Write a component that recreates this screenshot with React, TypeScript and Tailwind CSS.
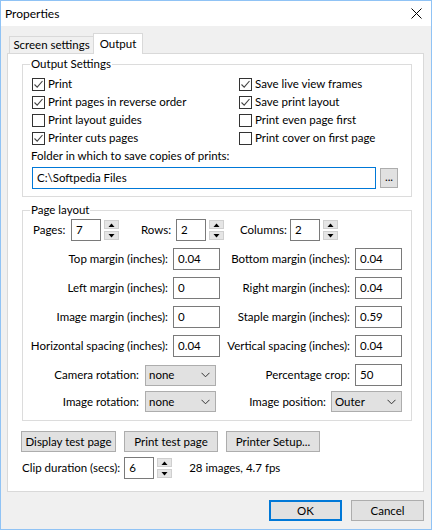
import React from "react";

const font = { fontFamily: 'Lato, "Segoe UI", Arial, sans-serif' };

function Check({ checked, label }: { checked?: boolean; label: string }) {
  return (
    <div className="flex h-[18px] items-center">
      <span className="flex h-[13px] w-[13px] items-center justify-center border border-[#333333] bg-white">
        {checked && (
          <svg width="11" height="11" viewBox="0 0 11 11">
            <path d="M1.5 5.5 L4.2 8.2 L9.5 2" fill="none" stroke="#444" strokeWidth="1.1" />
          </svg>
        )}
      </span>
      <span className="ml-[3px]">{label}</span>
    </div>
  );
}

function Spin() {
  return (
    <div className="flex flex-col gap-[2px]">
      {["up", "down"].map((d) => (
        <div
          key={d}
          className="flex h-[9px] w-[15px] items-center justify-center border border-[#cfcfcf] bg-[#e5e5e5]"
        >
          <svg width="7" height="4" viewBox="0 0 7 4">
            {d === "up" ? <path d="M0.5 4 L3.5 0.5 L6.5 4 Z" fill="#000" /> : <path d="M0.5 0 L3.5 3.5 L6.5 0 Z" fill="#000" />}
          </svg>
        </div>
      ))}
    </div>
  );
}

function Field({ value, w = "w-[47px]" }: { value: string; w?: string }) {
  return (
    <div className={`flex h-[22px] shrink-0 ${w} items-center border border-[#7a7a7a] bg-white pl-[4px]`}>{value}</div>
  );
}

function Select({ value }: { value: string }) {
  return (
    <div className="flex h-[21px] w-[71px] shrink-0 items-center justify-between border border-[#adadad] bg-[#e1e1e1] pl-[3px] pr-[5px]">
      <span>{value}</span>
      <svg width="9" height="6" viewBox="0 0 9 6">
        <path d="M0.5 0.8 L4.5 4.8 L8.5 0.8" fill="none" stroke="#333" strokeWidth="1" />
      </svg>
    </div>
  );
}

function Group({ title, className, children }: { title: string; className: string; children: React.ReactNode }) {
  return (
    <div className={`relative border border-[#dcdcdc] ${className}`}>
      <span className="absolute left-[7px] top-[-10px] bg-white px-[1px] leading-[18px]">{title}</span>
      {children}
    </div>
  );
}

function Btn({ label, w = "w-[94px]", def }: { label: string; w?: string; def?: boolean }) {
  return (
    <div
      className={`flex h-[21px] shrink-0 ${w} items-center justify-center bg-[#e1e1e1] ${
        def ? "border-2 border-[#0078d7]" : "border border-[#adadad]"
      }`}
    >
      {label}
    </div>
  );
}

function MarginRow({ l, lv, r, rv, className = "" }: { l: string; lv: string; r: string; rv: string; className?: string }) {
  return (
    <div className={`flex h-[22px] items-center ${className}`}>
      <span className="w-[150px] shrink-0 pr-[5px] text-right">{l}</span>
      <Field value={lv} />
      <span className="w-[135px] shrink-0 pr-[5px] text-right">{r}</span>
      <Field value={rv} />
    </div>
  );
}

export default function App() {
  return (
    <div
      style={font}
      className="flex h-[530px] w-[432px] flex-col whitespace-nowrap border border-[#90c3f5] bg-[#f0f0f0] text-[11.5px] text-black"
    >
      <div className="flex h-[25px] items-center justify-between bg-white pl-[4px] pr-[9px]">
        <span className="text-[12px]">Properties</span>
        <svg width="11" height="11" viewBox="0 0 11 11">
          <path d="M0.5 0.5 L10.5 10.5 M10.5 0.5 L0.5 10.5" stroke="#000" strokeWidth="1" />
        </svg>
      </div>

      <div className="flex h-[27px] items-end pl-[8px]">
        <div className="flex h-[17px] w-[84px] items-center justify-center border-l border-t border-[#d9d9d9]">
          Screen settings
        </div>
        <div className="relative z-10 -mb-px flex h-[21px] w-[50px] items-center justify-center border-x border-t border-[#d9d9d9] bg-white pb-[1px]">
          Output
        </div>
      </div>

      <div className="ml-[6px] flex h-[439px] w-[417px] flex-col border border-[#d9d9d9] bg-white pl-[14px]">
        <Group title="Output Settings" className="mt-[10px] h-[133px] w-[390px] pl-[9px] pt-[10px]">
          <div className="grid grid-cols-[207px_1fr]">
            <Check checked label="Print" />
            <Check checked label="Save live view frames" />
            <Check checked label="Print pages in reverse order" />
            <Check checked label="Save print layout" />
            <Check label="Print layout guides" />
            <Check label="Print even page first" />
            <Check checked label="Printer cuts pages" />
            <Check label="Print cover on first page" />
          </div>
          <div className="ml-[-1px] flex h-[18px] items-center">Folder in which to save copies of prints:</div>
          <div className="mt-[2px] flex items-center">
            <div className="flex h-[22px] w-[344px] items-center border border-[#0078d7] bg-white pl-[4px]">
              C:\Softpedia Files
            </div>
            <div className="ml-[4px] flex h-[20px] w-[18px] items-center justify-center border border-[#adadad] bg-[#e1e1e1] pb-[3px]">
              ...
            </div>
          </div>
        </Group>

        <Group title="Page layout" className="mt-[13px] h-[211px] w-[390px] pt-[8px]">
          <div className="flex h-[22px] items-center pl-[10px]">
            <span className="w-[38px] shrink-0">Pages:</span>
            <Field value="7" w="w-[30px]" />
            <div className="ml-[3px]">
              <Spin />
            </div>
            <span className="ml-[22px] w-[35px] shrink-0">Rows:</span>
            <Field value="2" w="w-[30px]" />
            <div className="ml-[3px]">
              <Spin />
            </div>
            <span className="ml-[16px] w-[50px] shrink-0">Columns:</span>
            <Field value="2" w="w-[30px]" />
            <div className="ml-[3px]">
              <Spin />
            </div>
          </div>
          <MarginRow className="mt-[7px]" l="Top margin (inches):" lv="0.04" r="Bottom margin (inches):" rv="0.04" />
          <MarginRow className="mt-[7px]" l="Left margin (inches):" lv="0" r="Right margin (inches):" rv="0.04" />
          <MarginRow className="mt-[7px]" l="Image margin (inches):" lv="0" r="Staple margin (inches):" rv="0.59" />
          <MarginRow
            className="mt-[7px]"
            l="Horizontal spacing (inches):"
            lv="0.04"
            r="Vertical spacing (inches):"
            rv="0.04"
          />
          <div className="mt-[7px] flex h-[22px] items-center">
            <span className="w-[122px] shrink-0 pr-[6px] text-right">Camera rotation:</span>
            <Select value="none" />
            <span className="w-[139px] shrink-0 pr-[5px] text-right">Percentage crop:</span>
            <Field value="50" />
          </div>
          <div className="mt-[5px] flex h-[21px] items-center">
            <span className="w-[122px] shrink-0 pr-[6px] text-right">Image rotation:</span>
            <Select value="none" />
            <span className="w-[115px] shrink-0 pr-[5px] text-right">Image position:</span>
            <Select value="Outer" />
          </div>
        </Group>

        <div className="ml-[-1px] mt-[10px] flex gap-[8px]">
          <Btn label="Display test page" w="w-[95px]" />
          <Btn label="Print test page" />
          <Btn label="Printer Setup..." />
        </div>

        <div className="mt-[5px] flex h-[22px] items-center">
          <span className="shrink-0 pr-[4px]">Clip duration (secs):</span>
          <Field value="6" w="w-[30px]" />
          <div className="ml-[3px]">
            <Spin />
          </div>
          <span className="ml-[17px]">28 images, 4.7 fps</span>
        </div>
      </div>

      <div className="mt-[8px] flex justify-end gap-[9px] pr-[7px]">
        <Btn label="OK" w="w-[73px]" def />
        <Btn label="Cancel" w="w-[73px]" />
      </div>
    </div>
  );
}
